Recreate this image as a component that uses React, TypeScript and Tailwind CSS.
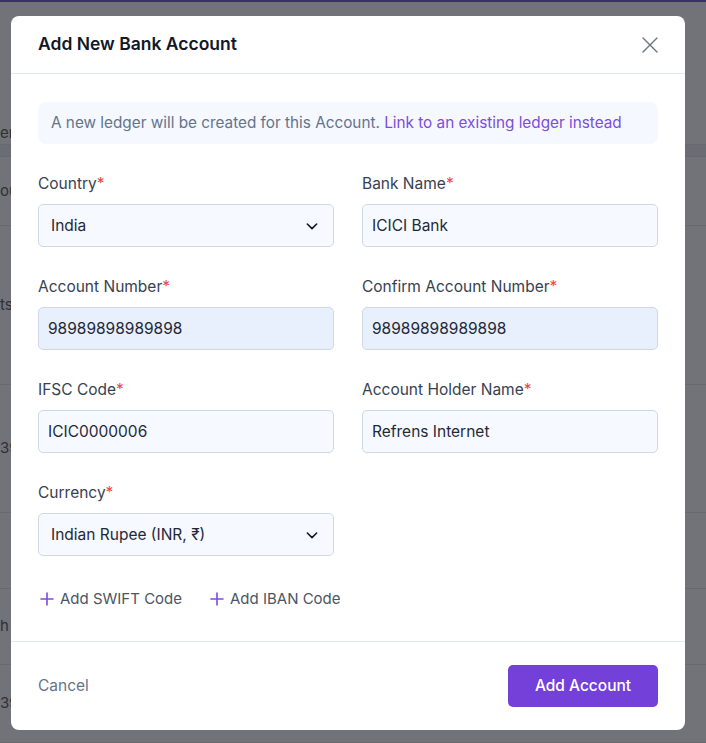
import React from 'react';

const rows = [
    { h: 'h-[12px]', text: '', tone: 'bg-[#6b6d74]' },
    { h: 'h-[69px]', text: 'ou', tone: '' },
    { h: 'h-[159px]', text: 'ts', tone: '' },
    { h: 'h-[128px]', text: '39', tone: '' },
    { h: 'h-[76px]', text: '', tone: '' },
    { h: 'h-[76px]', text: 'h', tone: '' },
    { h: 'h-[78px]', text: '39', tone: '' },
];

const Label = ({ children }: { children: React.ReactNode }) => (
    <label className="block text-[15.5px] leading-5 text-[#374151]">
        {children}
        <span className="text-[#ef4444]">*</span>
    </label>
);

const Field = ({ label, value, autofill }: { label: string; value: string; autofill?: boolean }) => (
    <div>
        <Label>{label}</Label>
        <div
            className={`mt-[10px] flex h-[43px] items-center rounded-[5px] border border-[#cfd9e6] px-[9px] text-[15.5px] text-[#1f2937] ${
                autofill ? 'bg-[#e8f0fe]' : 'bg-[#f6f9ff]'
            }`}
        >
            {value}
        </div>
    </div>
);

const Select = ({ label, value }: { label: string; value: string }) => (
    <div>
        <Label>{label}</Label>
        <div className="mt-[10px] flex h-[43px] items-center justify-between rounded-[5px] border border-[#cfd9e6] bg-[#f6f9ff] pl-[12px] pr-[13px] text-[15.5px] text-[#1f2937]">
            <span>{value}</span>
            <svg width="16" height="16" viewBox="0 0 24 24" fill="none" stroke="#111827" strokeWidth="2.4" strokeLinecap="round" strokeLinejoin="round">
                <path d="M5 9l7 7 7-7" />
            </svg>
        </div>
    </div>
);

const Plus = () => (
    <svg width="14" height="14" viewBox="0 0 14 14" fill="none" stroke="#7c4ddb" strokeWidth="1.6" strokeLinecap="round">
        <path d="M7 1v12M1 7h12" />
    </svg>
);

const App = () => {
    return (
        <div className="relative h-[743px] w-[706px] overflow-hidden bg-[#717379]" style={{ fontFamily: 'Inter, "Noto Sans", sans-serif' }}>
            <div className="h-[2px] bg-[#3b2f6b]" />
            {/* underlying page, dimmed by the overlay */}
            <div className="flex flex-col">
                <div className="h-[143px] border-b border-[#67696f] pt-[120px] text-[15px] text-[#2f3136]">
                    <span>er</span>
                </div>
                {rows.map((r, i) => (
                    <div key={i} className={`${r.h} ${r.tone} flex items-center border-b border-[#67696f] text-[15px] text-[#2f3136]`}>
                        <span>{r.text}</span>
                    </div>
                ))}
            </div>

            <div className="absolute left-[11px] top-[16px] w-[674px] rounded-[8px] bg-white">
                <div className="flex h-[58px] items-center justify-between border-b border-[#e3e9f2] pl-[27px] pr-[26px]">
                    <h2 className="text-[17.5px] font-semibold text-[#111827]">Add New Bank Account</h2>
                    <svg width="18" height="18" viewBox="0 0 18 18" fill="none" stroke="#6b7280" strokeWidth="1.4" strokeLinecap="round">
                        <path d="M2 2l14 14M16 2L2 16" />
                    </svg>
                </div>

                <div className="border-b border-[#e3e9f2] px-[27px] pb-[30px] pt-[28px]">
                    <div className="flex h-[42px] items-center rounded-[8px] bg-[#f5f8ff] px-[13px] text-[15.3px] text-[#64748b]">
                        A new ledger will be created for this Account.&nbsp;
                        <span className="text-[#7c4ddb]">Link to an existing ledger instead</span>
                    </div>

                    <div className="mt-[30px] grid grid-cols-2 gap-x-[28px] gap-y-[30px]">
                        <Select label="Country" value="India" />
                        <Field label="Bank Name" value="ICICI Bank" />
                        <Field label="Account Number" value="98989898989898" autofill />
                        <Field label="Confirm Account Number" value="98989898989898" autofill />
                        <Field label="IFSC Code" value="ICIC0000006" />
                        <Field label="Account Holder Name" value="Refrens Internet" />
                        <Select label="Currency" value="Indian Rupee (INR, ₹)" />
                    </div>

                    <div className="mt-[32px] flex items-center gap-[28px] pl-[2px] text-[15px] text-[#4b5563]">
                        <span className="flex items-center gap-[6px]">
                            <Plus />
                            Add SWIFT Code
                        </span>
                        <span className="flex items-center gap-[6px]">
                            <Plus />
                            Add IBAN Code
                        </span>
                    </div>
                </div>

                <div className="flex h-[88px] items-center justify-between px-[27px]">
                    <button className="text-[15.5px] text-[#64748b]">Cancel</button>
                    <button className="h-[42px] w-[150px] rounded-[5px] bg-[#7340d9] text-[15.5px] font-medium text-white">
                        Add Account
                    </button>
                </div>
            </div>
        </div>
    );
};

export default App;
